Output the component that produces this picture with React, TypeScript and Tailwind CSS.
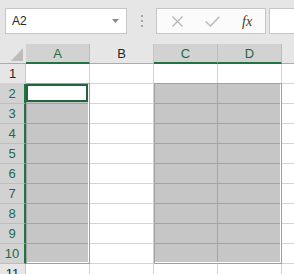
import React from "react";

const cols = ["A", "B", "C", "D"];
const rows = [1, 2, 3, 4, 5, 6, 7, 8, 9, 10, 11];
const selCols = ["A", "C", "D"];
const isSelRow = (r: number) => r >= 2 && r <= 10;

const font = { fontFamily: '"Liberation Sans", Arial, sans-serif' };

const Toolbar = () => (
  <div className="flex h-[44px] items-start bg-[#e6e6e6] pt-[8px] pl-[5px]">
    {/* Name box */}
    <div className="flex h-[26px] w-[122px] shrink-0 items-center justify-between border border-[#c6c6c6] bg-white pr-[7px] pl-[6px]">
      <span className="text-[12px] text-[#262626]">A2</span>
      <svg width="7" height="4" viewBox="0 0 7 4">
        <polygon points="0,0 7,0 3.5,4" fill="#8a8a8a" />
      </svg>
    </div>

    {/* Grip dots */}
    <div className="ml-[14px] flex h-[26px] flex-col items-center justify-center gap-[3px]">
      <span className="h-[2px] w-[2px] bg-[#a6a6a6]" />
      <span className="h-[2px] w-[2px] bg-[#a6a6a6]" />
      <span className="h-[2px] w-[2px] bg-[#a6a6a6]" />
    </div>

    {/* Cancel / enter / fx */}
    <div className="ml-[13px] flex h-[26px] w-[110px] shrink-0 items-center border border-[#c6c6c6] bg-[#fbfbfb]">
      <svg className="ml-[15px]" width="11" height="11" viewBox="0 0 11 11">
        <path d="M0.5 0.5 L10.5 10.5 M10.5 0.5 L0.5 10.5" stroke="#b4b4b4" strokeWidth="1.2" fill="none" />
      </svg>
      <svg className="ml-[22px]" width="15" height="11" viewBox="0 0 15 11">
        <path d="M0.7 5.5 L5.5 10 L14.3 0.7" stroke="#bdbdbd" strokeWidth="1.6" fill="none" />
      </svg>
      <span
        className="ml-[22px] text-[14px] text-[#3c3c3c] italic"
        style={{ fontFamily: '"Liberation Serif", "Times New Roman", serif' }}
      >
        fx
      </span>
    </div>

    {/* Formula input */}
    <div className="ml-[3px] h-[26px] flex-1 border border-r-0 border-[#c6c6c6] bg-white" />
  </div>
);

const HeaderRow = () => (
  <div className="flex h-5">
    <div className="flex h-5 w-[26px] shrink-0 items-end justify-end border-b border-[#ababab] bg-[#e6e6e6] pr-[3px] pb-[2px]">
      <svg width="12" height="13" viewBox="0 0 12 13">
        <polygon points="12,0 12,13 0,13" fill="#bcbcbc" />
      </svg>
    </div>
    {cols.map((c) =>
      selCols.includes(c) ? (
        <div
          key={c}
          className="flex h-5 w-16 shrink-0 items-center justify-center border-r border-b-2 border-r-[#bdbdbd] border-b-[#217346] bg-[#d2d2d2] pt-[1px] text-[13px] text-[#1e6b41]"
        >
          {c}
        </div>
      ) : (
        <div
          key={c}
          className="flex h-5 w-16 shrink-0 items-center justify-center border-r border-b border-r-[#c6c6c6] border-b-[#ababab] bg-[#e6e6e6] text-[13px] text-[#262626]"
        >
          {c}
        </div>
      )
    )}
    <div className="h-5 flex-1 border-b border-[#ababab] bg-[#e6e6e6]" />
  </div>
);

const Row = ({ r }: { r: number }) => {
  const sel = isSelRow(r);
  return (
    <div className="flex h-5">
      {sel ? (
        <div className="flex h-5 w-[26px] shrink-0 items-center justify-center border-r-2 border-b border-r-[#217346] border-b-[#bdbdbd] bg-[#d2d2d2] text-[13px] text-[#1e6b41]">
          {r}
        </div>
      ) : (
        <div className="flex h-5 w-[26px] shrink-0 items-center justify-center border-r border-b border-r-[#c6c6c6] border-b-[#d4d4d4] bg-[#e6e6e6] text-[13px] text-[#262626]">
          {r}
        </div>
      )}
      {cols.map((c) =>
        sel && selCols.includes(c) ? (
          <div key={c} className="h-5 w-16 shrink-0 border-r border-b border-[#a4a4a4] bg-[#c6c6c6]" />
        ) : (
          <div key={c} className="h-5 w-16 shrink-0 border-r border-b border-[#d4d4d4] bg-white" />
        )
      )}
      <div className="h-5 flex-1 border-b border-[#d4d4d4] bg-white" />
    </div>
  );
};

export default function App() {
  return (
    <div className="relative h-[274px] w-[294px] overflow-hidden bg-white" style={font}>
      <Toolbar />
      <HeaderRow />
      {rows.map((r) => (
        <Row key={r} r={r} />
      ))}

      {/* Selection A2:A10 */}
      <div className="absolute top-[83px] left-[26px] h-[181px] w-[64px] border border-[#a0a0a0]">
        <div className="h-full w-full border-r border-b border-white" />
      </div>
      {/* Active cell A2 */}
      <div className="absolute top-[84px] left-[26px] h-[18px] w-[62px] border-2 border-[#22643f] bg-white" />

      {/* Selection C2:D10 */}
      <div className="absolute top-[83px] left-[154px] h-[181px] w-[128px] border border-[#a0a0a0]">
        <div className="h-full w-full border-r border-b border-white" />
      </div>
    </div>
  );
}
